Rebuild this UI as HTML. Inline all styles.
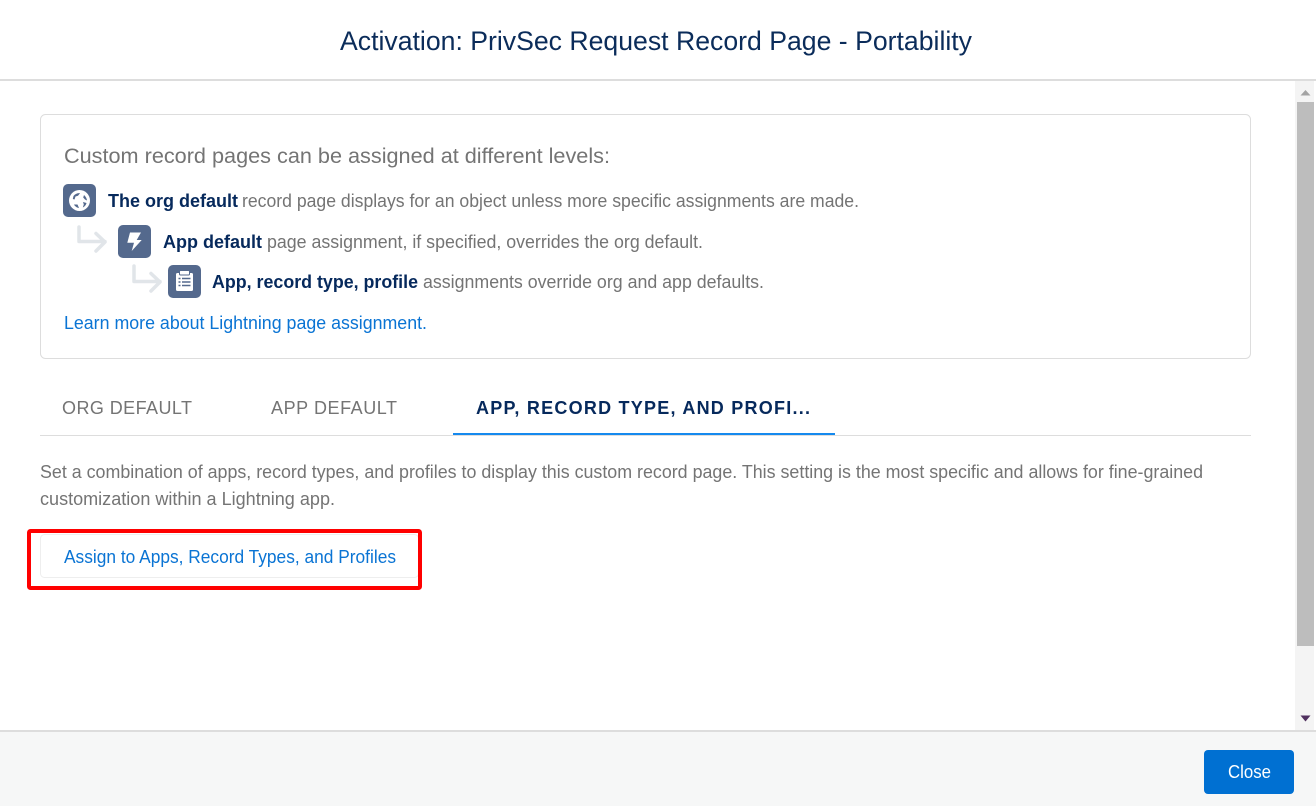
<!DOCTYPE html>
<html lang="en">
<head>
<meta charset="utf-8">
<title>Activation: PrivSec Request Record Page - Portability</title>
<style>
html,body{margin:0;padding:0;background:#fff;width:1316px;height:806px;overflow:hidden}
svg{display:block;position:absolute;left:0;top:0}
text{font-family:"Liberation Sans",Arial,sans-serif}
.b{font-weight:700;fill:#06295c}
.r{fill:#747474}
.l{fill:#0a74d4}
</style>
</head>
<body>
<svg width="1316" height="806" viewBox="0 0 1316 806" xmlns="http://www.w3.org/2000/svg">
<rect width="1316" height="806" fill="#fff"/>
<!-- header -->
<rect x="0" y="79" width="1316" height="2" fill="#dddddd"/>
<text x="340" y="50" font-size="27" fill="#0b2c5a" textLength="632" lengthAdjust="spacingAndGlyphs">Activation: PrivSec Request Record Page - Portability</text>

<!-- scrollbar -->
<rect x="1295" y="81" width="19" height="649" fill="#f4f4f4"/>
<rect x="1297" y="102" width="17" height="544" fill="#bdbdbd"/>
<path d="M1300.500 95.500L1305.500 90L1310.500 95.500Z" fill="#a3a3a3"/>
<path d="M1300.500 715.500H1310.500L1305.500 721.500Z" fill="#50305f"/>

<!-- info panel -->
<rect x="40.500" y="114.500" width="1210" height="244" rx="5" fill="#fff" stroke="#dddddd"/>
<text class="r" x="64" y="163" font-size="21" textLength="546" lengthAdjust="spacingAndGlyphs">Custom record pages can be assigned at different levels:</text>

<!-- globe icon -->
<rect x="63" y="184" width="33" height="33" rx="5" fill="#54698d"/>
<circle cx="79.500" cy="200.500" r="10.500" fill="#fff"/>
<path d="M73.500 196C75 194 77.500 193 80 193.200L78 195.800L75.500 196.500L74.500 199.500L72.800 199Z" fill="#54698d"/>
<path d="M84 195C85.800 196.500 86.800 198.500 87 200.500L85 199.500L83.200 197.500Z" fill="#54698d"/>
<path d="M83 202L86.500 203C86 205 84.500 206.800 82.800 207.500L83.800 204.500Z" fill="#54698d"/>
<path d="M74 204.500L77.500 204.500L79 208C77 207.800 75 206.500 74 204.500Z" fill="#54698d"/>

<!-- connector 1 -->
<path d="M79 227V241.500H105M96 233.500L105 242L96 251" fill="none" stroke="#e1e5e9" stroke-width="3.500" stroke-linecap="round" stroke-linejoin="round"/>
<!-- bolt icon -->
<rect x="118" y="225" width="33" height="33" rx="5" fill="#54698d"/>
<path d="M130 232.500H141L136.700 240H141.700L131.700 251L134 242.700H127.300Z" fill="#fff"/>

<!-- connector 2 -->
<path d="M134 266V281.500H160M151 273.500L160 282L151 291" fill="none" stroke="#e1e5e9" stroke-width="3.500" stroke-linecap="round" stroke-linejoin="round"/>
<!-- clipboard icon -->
<rect x="168" y="265" width="33" height="33" rx="5" fill="#54698d"/>
<rect x="176" y="273" width="17" height="18" rx="1.500" fill="#fff"/>
<rect x="179.500" y="270.500" width="10" height="4.500" rx="1" fill="#fff" stroke="#54698d"/>
<path d="M178.500 278.500H180.500M182 278.500H190.500M178.500 282H180.500M182 282H190.500M178.500 285.500H180.500M182 285.500H190.500" stroke="#54698d" stroke-width="1.500"/>

<!-- levels -->
<text class="b" x="108" y="207" font-size="18" textLength="130" lengthAdjust="spacingAndGlyphs">The org default</text>
<text class="r" x="242" y="207" font-size="18" textLength="617" lengthAdjust="spacingAndGlyphs">record page displays for an object unless more specific assignments are made.</text>
<text class="b" x="163" y="248" font-size="18" textLength="99" lengthAdjust="spacingAndGlyphs">App default</text>
<text class="r" x="267" y="248" font-size="18" textLength="436" lengthAdjust="spacingAndGlyphs">page assignment, if specified, overrides the org default.</text>
<text class="b" x="212" y="288" font-size="18" textLength="206" lengthAdjust="spacingAndGlyphs">App, record type, profile</text>
<text class="r" x="423" y="288" font-size="18" textLength="341" lengthAdjust="spacingAndGlyphs">assignments override org and app defaults.</text>
<text class="l" x="64" y="329" font-size="18" textLength="363" lengthAdjust="spacingAndGlyphs">Learn more about Lightning page assignment.</text>

<!-- tabs -->
<rect x="40" y="435" width="1211" height="1" fill="#dddddd"/>
<text class="r" x="62" y="414" font-size="18" textLength="130" lengthAdjust="spacing">ORG DEFAULT</text>
<text class="r" x="271" y="414" font-size="18" textLength="126" lengthAdjust="spacing">APP DEFAULT</text>
<text class="b" x="476" y="414" font-size="18" textLength="334" lengthAdjust="spacing">APP, RECORD TYPE, AND PROFI...</text>
<rect x="453" y="433" width="382" height="2" fill="#1589ee"/>

<!-- description -->
<text class="r" x="40" y="478" font-size="18" textLength="1163" lengthAdjust="spacingAndGlyphs">Set a combination of apps, record types, and profiles to display this custom record page. This setting is the most specific and allows for fine-grained</text>
<text class="r" x="40" y="505" font-size="18" textLength="295" lengthAdjust="spacingAndGlyphs">customization within a Lightning app.</text>

<!-- assign button -->
<rect x="40.500" y="534.500" width="378" height="43" rx="4" fill="#fff" stroke="#eeeeee"/>
<text class="l" x="64" y="563" font-size="18" textLength="332" lengthAdjust="spacingAndGlyphs">Assign to Apps, Record Types, and Profiles</text>
<rect x="29" y="531" width="391" height="57" rx="1.500" fill="none" stroke="#ff0000" stroke-width="4"/>

<!-- footer -->
<rect x="0" y="732" width="1316" height="74" fill="#f6f7f7"/>
<rect x="0" y="730" width="1316" height="2" fill="#dddddd"/>
<rect x="1204" y="750" width="90" height="44" rx="4" fill="#0070d2"/>
<text x="1228" y="778" font-size="18" fill="#fff" textLength="43" lengthAdjust="spacingAndGlyphs">Close</text>
</svg>
</body>
</html>
